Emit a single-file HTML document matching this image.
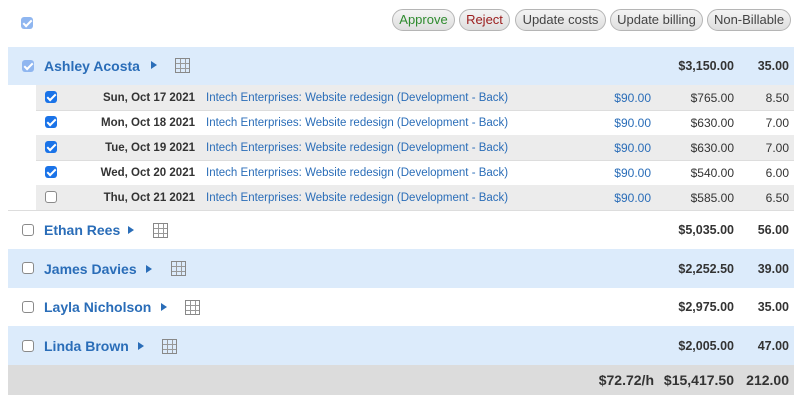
<!DOCTYPE html>
<html><head><style>
*{margin:0;padding:0;box-sizing:border-box}
body{width:800px;height:408px;background:#fff;font-family:"Liberation Sans",Arial,sans-serif;position:relative;overflow:hidden;color:#333}
.btn{position:absolute;top:9px;height:22px;border:1px solid #b5b5b5;border-radius:11px;background:linear-gradient(#f4f4f4,#dedede);font-size:13px;color:#444;text-align:center;line-height:20px}
.row{position:absolute;left:8px;width:786px}
.blue{background:#dcebfb}
.gray{background:#ececec}
.cb{position:absolute;width:12px;height:12px;border:1px solid #8a8a8a;border-radius:3px;background:#fff}
.cbk{position:absolute;width:12px;height:12px;border-radius:3px;background:#1a73e8}
.cbk:after{content:"";position:absolute;left:4px;top:1px;width:3px;height:7px;border:solid #fff;border-width:0 2px 2px 0;transform:rotate(45deg)}
.cbl{background:#8fb6f0}
.name{position:absolute;font-weight:bold;font-size:14px;color:#2a6db8}
.tri{position:absolute;width:0;height:0;border-top:4.5px solid transparent;border-bottom:4.5px solid transparent;border-left:6px solid #2a6db8}
.grid{position:absolute;width:15px;height:15px;border:1px solid #888;background-image:linear-gradient(90deg,transparent 4px,#999 4px,#999 5px,transparent 5px,transparent 9px,#999 9px,#999 10px,transparent 10px),linear-gradient(transparent 4px,#999 4px,#999 5px,transparent 5px,transparent 9px,#999 9px,#999 10px,transparent 10px)}
.r{position:absolute;text-align:right;font-size:12px}
.b{font-weight:bold;font-size:12.5px;color:#333}
.dt{font-size:11.5px;margin-top:1px}
.d{position:absolute;font-size:11.5px;color:#2a6db8;margin-top:1px}
</style></head><body>
<div class="cbk cbl" style="left:21px;top:17px"></div>
<div class="btn" style="left:392px;width:63px;color:#2e8b2e">Approve</div>
<div class="btn" style="left:459px;width:51px;color:#9b1c1c">Reject</div>
<div class="btn" style="left:515px;width:91px">Update costs</div>
<div class="btn" style="left:610px;width:93px">Update billing</div>
<div class="btn" style="left:707px;width:84px">Non-Billable</div>

<div class="row blue" style="top:47px;height:38px"></div>
<div class="cbk cbl" style="left:22px;top:60px"></div>
<div class="name" style="left:44px;top:58px">Ashley Acosta</div>
<div class="tri" style="left:151px;top:61px"></div>
<div class="grid" style="left:175px;top:58px"></div>
<div class="r b" style="right:66px;top:59px">$3,150.00</div>
<div class="r b" style="right:11px;top:59px">35.00</div>

<div class="row gray" style="top:85px;height:25px;left:36px;width:758px"></div>
<div class="row" style="top:110px;height:25px;left:36px;width:758px;border-top:1px solid #ddd"></div>
<div class="row gray" style="top:135px;height:25px;left:36px;width:758px"></div>
<div class="row" style="top:160px;height:25px;left:36px;width:758px;border-top:1px solid #ddd"></div>
<div class="row gray" style="top:185px;height:25px;left:36px;width:758px"></div>

<div class="cbk" style="left:45px;top:91px"></div>
<div class="cbk" style="left:45px;top:116px"></div>
<div class="cbk" style="left:45px;top:141px"></div>
<div class="cbk" style="left:45px;top:166px"></div>
<div class="cb" style="left:45px;top:191px"></div>

<div class="r b dt" style="right:605px;top:91px">Sun, Oct 17 2021</div>
<div class="r b dt" style="right:605px;top:116px">Mon, Oct 18 2021</div>
<div class="r b dt" style="right:605px;top:141px">Tue, Oct 19 2021</div>
<div class="r b dt" style="right:605px;top:166px">Wed, Oct 20 2021</div>
<div class="r b dt" style="right:605px;top:191px">Thu, Oct 21 2021</div>

<div class="d" style="left:206px;top:91px">Intech Enterprises: Website redesign (Development - Back)</div>
<div class="d" style="left:206px;top:116px">Intech Enterprises: Website redesign (Development - Back)</div>
<div class="d" style="left:206px;top:141px">Intech Enterprises: Website redesign (Development - Back)</div>
<div class="d" style="left:206px;top:166px">Intech Enterprises: Website redesign (Development - Back)</div>
<div class="d" style="left:206px;top:191px">Intech Enterprises: Website redesign (Development - Back)</div>

<div class="r" style="right:149px;top:91px;color:#2a6db8">$90.00</div>
<div class="r" style="right:149px;top:116px;color:#2a6db8">$90.00</div>
<div class="r" style="right:149px;top:141px;color:#2a6db8">$90.00</div>
<div class="r" style="right:149px;top:166px;color:#2a6db8">$90.00</div>
<div class="r" style="right:149px;top:191px;color:#2a6db8">$90.00</div>

<div class="r" style="right:66px;top:91px">$765.00</div>
<div class="r" style="right:66px;top:116px">$630.00</div>
<div class="r" style="right:66px;top:141px">$630.00</div>
<div class="r" style="right:66px;top:166px">$540.00</div>
<div class="r" style="right:66px;top:191px">$585.00</div>

<div class="r" style="right:11px;top:91px">8.50</div>
<div class="r" style="right:11px;top:116px">7.00</div>
<div class="r" style="right:11px;top:141px">7.00</div>
<div class="r" style="right:11px;top:166px">6.00</div>
<div class="r" style="right:11px;top:191px">6.50</div>

<div class="row" style="top:210px;height:39px;border-top:1px solid #ddd"></div>
<div class="cb" style="left:22px;top:224px"></div>
<div class="name" style="left:44px;top:222px">Ethan Rees</div>
<div class="tri" style="left:128px;top:226px"></div>
<div class="grid" style="left:153px;top:223px"></div>
<div class="r b" style="right:66px;top:223px">$5,035.00</div>
<div class="r b" style="right:11px;top:223px">56.00</div>

<div class="row blue" style="top:249px;height:39px"></div>
<div class="cb" style="left:22px;top:262px"></div>
<div class="name" style="left:44px;top:261px">James Davies</div>
<div class="tri" style="left:146px;top:265px"></div>
<div class="grid" style="left:171px;top:261px"></div>
<div class="r b" style="right:66px;top:262px">$2,252.50</div>
<div class="r b" style="right:11px;top:262px">39.00</div>

<div class="cb" style="left:22px;top:301px"></div>
<div class="name" style="left:44px;top:299px">Layla Nicholson</div>
<div class="tri" style="left:161px;top:303px"></div>
<div class="grid" style="left:185px;top:300px"></div>
<div class="r b" style="right:66px;top:300px">$2,975.00</div>
<div class="r b" style="right:11px;top:300px">35.00</div>

<div class="row blue" style="top:326px;height:39px"></div>
<div class="cb" style="left:22px;top:340px"></div>
<div class="name" style="left:44px;top:338px">Linda Brown</div>
<div class="tri" style="left:138px;top:342px"></div>
<div class="grid" style="left:162px;top:339px"></div>
<div class="r b" style="right:66px;top:339px">$2,005.00</div>
<div class="r b" style="right:11px;top:339px">47.00</div>

<div class="row" style="top:365px;height:30px;background:#dcdcdc"></div>
<div class="r b" style="right:146px;top:372px;font-size:14px">$72.72/h</div>
<div class="r b" style="right:66px;top:372px;font-size:14px">$15,417.50</div>
<div class="r b" style="right:11px;top:372px;font-size:14px">212.00</div>
</body></html>
